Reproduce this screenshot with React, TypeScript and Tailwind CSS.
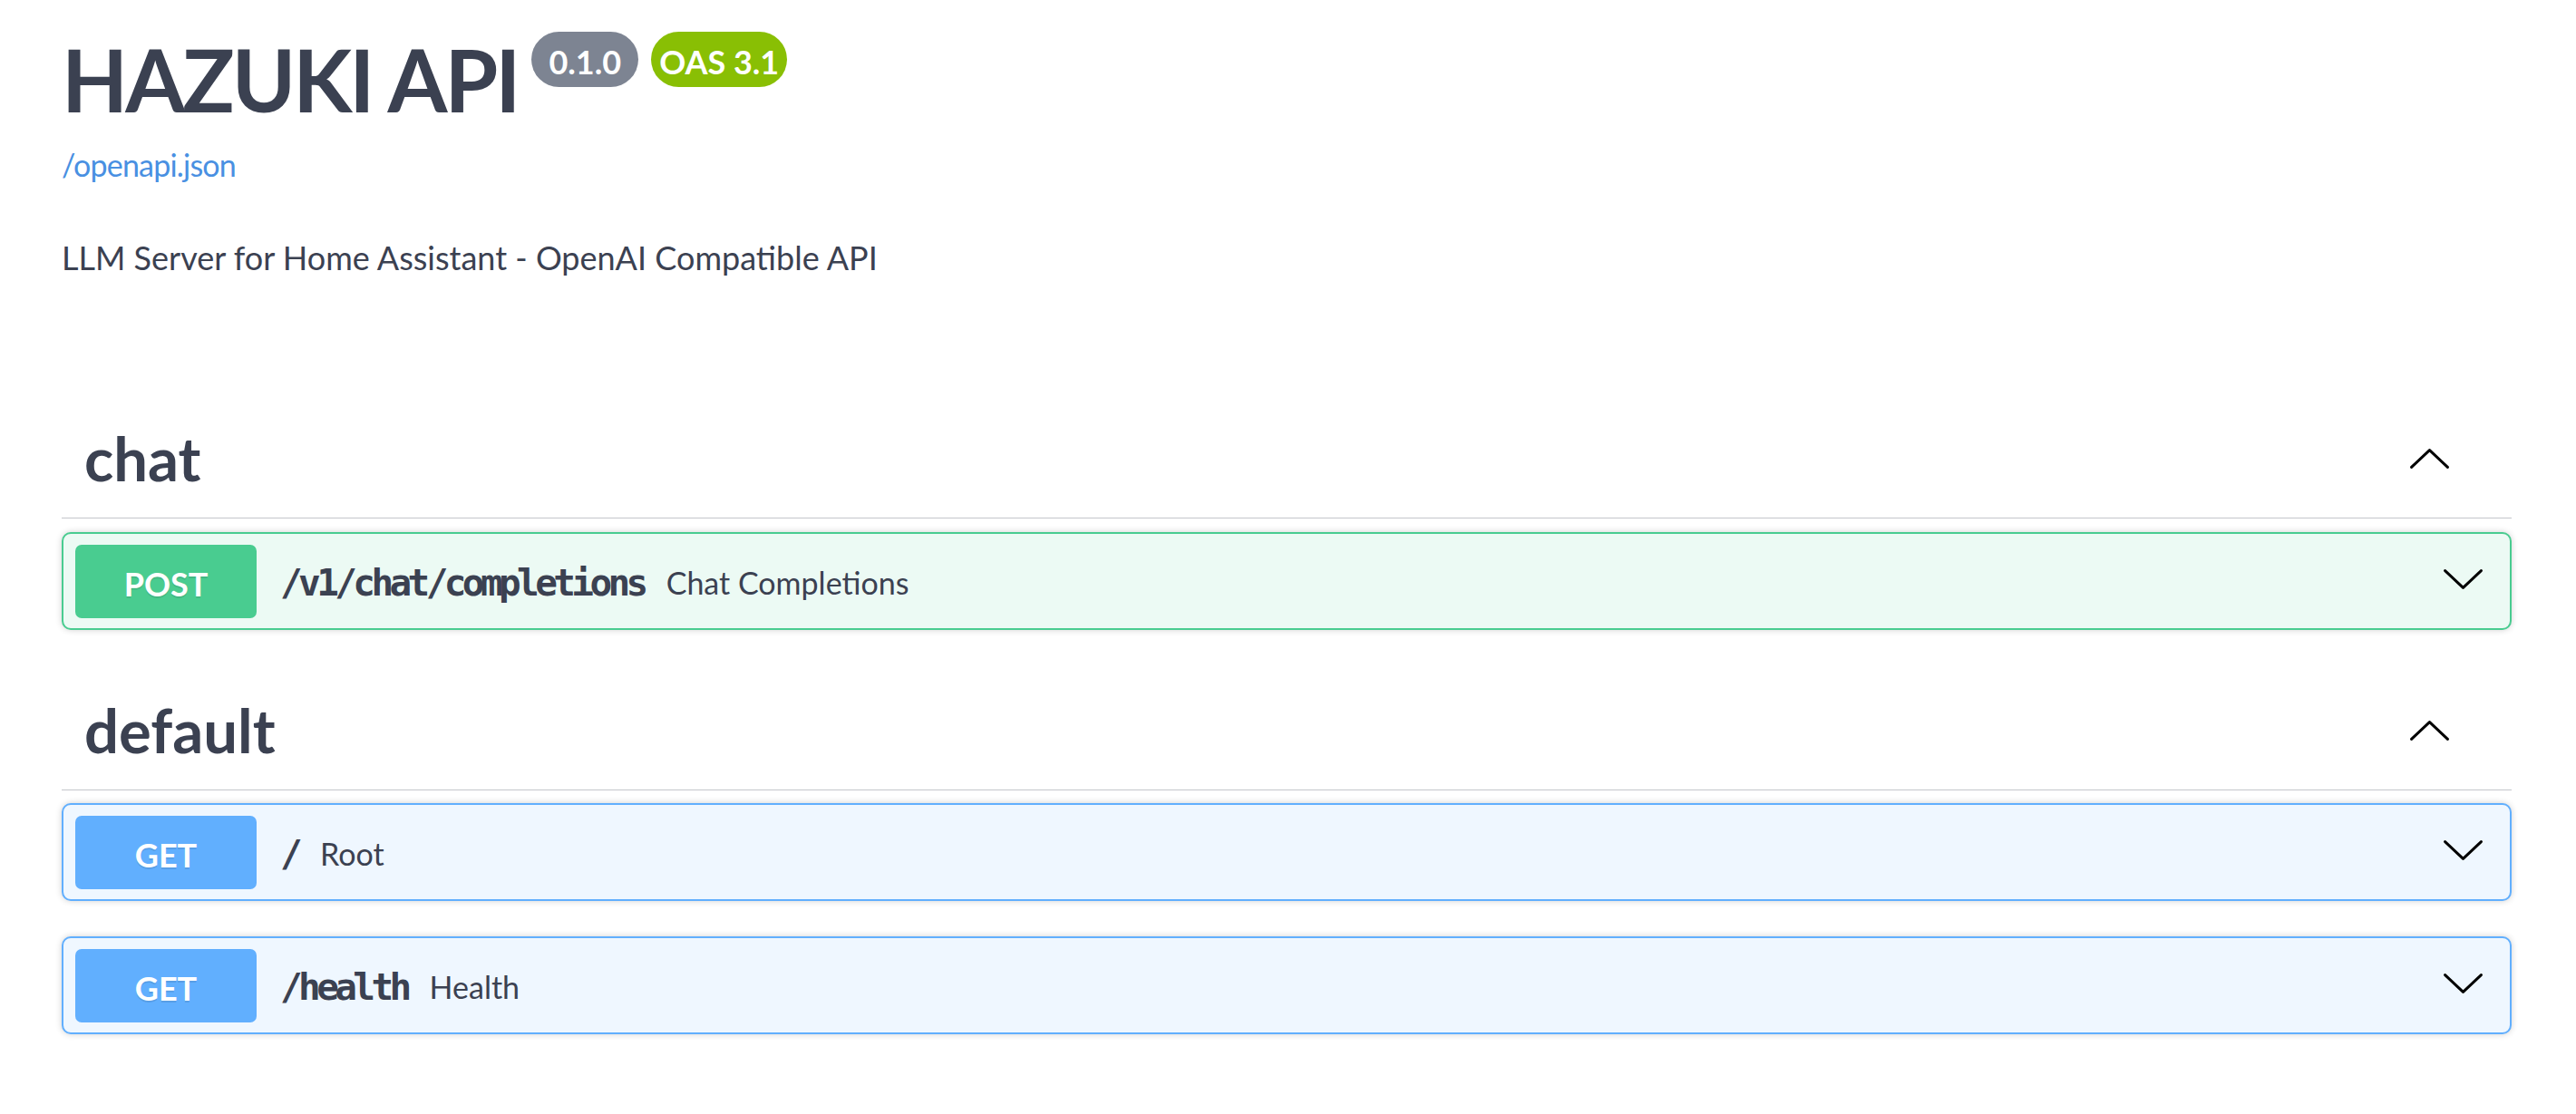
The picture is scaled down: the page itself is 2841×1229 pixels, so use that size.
import React from "react";

type Method = "POST" | "GET";

function Chevron({ up = false }: { up?: boolean }) {
  return (
    <svg
      width="43"
      height="22"
      viewBox="0 0 43 22"
      className={up ? "block rotate-180" : "block"}
      aria-hidden="true"
    >
      <polyline
        points="1.6,1.6 21.5,20.4 41.4,1.6"
        fill="none"
        stroke="#000"
        strokeWidth="3"
        strokeLinecap="round"
        strokeLinejoin="round"
      />
    </svg>
  );
}

function Operation({
  method,
  path,
  summary,
}: {
  method: Method;
  path: string;
  summary: string;
}) {
  const isPost = method === "POST";
  return (
    <div
      className={
        isPost
          ? "flex h-[108px] items-center rounded-[10px] border-2 border-[#49cc90] bg-[#ecfaf4] px-[13px] shadow-[0_0_7px_rgba(0,0,0,0.19)]"
          : "flex h-[108px] items-center rounded-[10px] border-2 border-[#61affe] bg-[#eff7ff] px-[13px] shadow-[0_0_7px_rgba(0,0,0,0.19)]"
      }
    >
      <div
        className={
          isPost
            ? "flex h-[81px] w-[200px] shrink-0 items-center justify-center rounded-[7px] bg-[#49cc90] pt-[5px] text-[36px] font-bold text-white text-shadow-[0_2px_0_rgba(0,0,0,0.1)]"
            : "flex h-[81px] w-[200px] shrink-0 items-center justify-center rounded-[7px] bg-[#61affe] pt-[5px] text-[36px] font-bold text-white text-shadow-[0_2px_0_rgba(0,0,0,0.1)]"
        }
      >
        {method}
      </div>
      <span className="ml-[26px] pt-[6px] font-['DejaVu_Sans_Mono',monospace] text-[41px] font-bold tracking-[-4.6px] text-[#3b4151]">
        {path}
      </span>
      <span className="ml-[24px] pt-[3px] text-[34px] text-[#3b4151]">
        {summary}
      </span>
      <div className="flex-1" />
      <div className="mb-[4px] mr-[17px]">
        <Chevron />
      </div>
    </div>
  );
}

function TagHeader({ name }: { name: string }) {
  return (
    <div className="flex h-[132px] items-center border-b border-[#c4c6cb] pl-[25px]">
      <h3 className="text-[67px] font-bold leading-none text-[#3b4151]">
        {name}
      </h3>
      <div className="flex-1" />
      <div className="mr-[69px]">
        <Chevron up />
      </div>
    </div>
  );
}

export default function App() {
  return (
    <div className="min-h-screen bg-white pl-[68px] pr-[71px] font-['Lato',sans-serif] text-[#3b4151]">
      <div className="flex items-start pt-[32px]">
        <h1 className="text-[95px] font-bold leading-[110px] tracking-[-3px] text-[#3b4151]">
          HAZUKI API
        </h1>
        <span className="ml-[15px] mt-[3px] flex h-[61px] items-center rounded-full bg-[#7d8492] px-[19px] pt-[4px] text-[36px] font-bold text-white">
          0.1.0
        </span>
        <span className="ml-[14px] mt-[3px] flex h-[61px] items-center rounded-full bg-[#89bf04] px-[9px] pt-[4px] text-[36px] font-bold text-white">
          OAS 3.1
        </span>
      </div>
      <div className="mt-[18px] text-[34px] leading-[44px] tracking-[-0.8px]">
        <a className="text-[#4990e2]" href="#">
          /openapi.json
        </a>
      </div>
      <p className="mt-[58px] text-[36px] leading-[44px] text-[#3b4151]">
        LLM Server for Home Assistant - OpenAI Compatible API
      </p>

      <section className="mt-[134px]">
        <TagHeader name="chat" />
        <div className="mt-[15px]">
          <Operation
            method="POST"
            path="/v1/chat/completions"
            summary="Chat Completions"
          />
        </div>
      </section>

      <section className="mt-[45px]">
        <TagHeader name="default" />
        <div className="mt-[14px] flex flex-col gap-[39px]">
          <Operation method="GET" path="/" summary="Root" />
          <Operation method="GET" path="/health" summary="Health" />
        </div>
      </section>
    </div>
  );
}
